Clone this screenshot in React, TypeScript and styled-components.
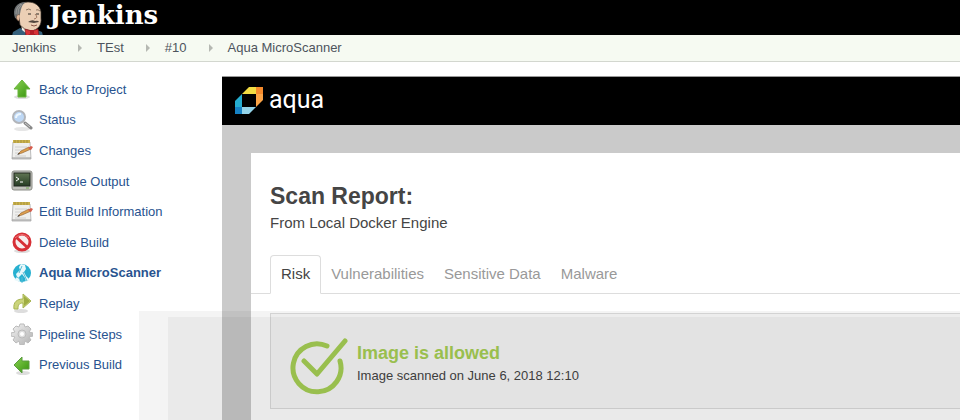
import React from "react";
import styled, { createGlobalStyle } from "styled-components";

const GlobalStyle = createGlobalStyle`
  *, *::before, *::after { box-sizing: border-box; }
  body { margin: 0; background: #fff; font-family: "Liberation Sans", Arial, sans-serif; font-size: 13px; color: #454545; }
  h1, h2, p, ul, ol { margin: 0; padding: 0; }
  ul, ol { list-style: none; }
`;

const Page = styled.div`
  position: relative;
  display: flex;
  flex-direction: column;
  min-height: 100vh;
  overflow: hidden;
`;

const TopBar = styled.header`
  display: flex;
  align-items: flex-start;
  height: 35px;
  padding-left: 12px;
  overflow: hidden;
  background: #000;
`;

const BrandLink = styled.a`
  display: flex;
  gap: 6px;
  color: #fff;
  text-decoration: none;
`;

const BrandName = styled.span`
  font-family: "DejaVu Serif", Georgia, serif;
  font-size: 26px;
  font-weight: bold;
  line-height: 31px;
`;

const Crumbs = styled.ol`
  display: flex;
  align-items: center;
  height: 27px;
  padding-left: 12px;
  background: #f6faf2;
  border-bottom: 1px solid #d3d7cf;
`;

const Crumb = styled.li`
  display: flex;
  align-items: center;
  & + &::before {
    content: "";
    margin: 0 15px 0 22px;
    border-left: 4px solid #b5b8b2;
    border-top: 4px solid transparent;
    border-bottom: 4px solid transparent;
  }
`;

const CrumbLink = styled.a`
  color: #4d545d;
  line-height: 20px;
  text-decoration: none;
`;

const Body = styled.div`
  display: flex;
  flex: 1;
`;

const SideNav = styled.nav`
  flex: 0 0 222px;
  padding: 12px 0 0 11px;
`;

const TaskList = styled.ul`
  display: grid;
  grid-auto-rows: 1fr;
  min-height: 306px;
`;

const Task = styled.a<{ $current?: boolean }>`
  display: flex;
  align-items: center;
  gap: 6px;
  height: 100%;
  color: #28538f;
  font-weight: ${(p) => (p.$current ? "bold" : "normal")};
  text-decoration: none;
`;

const Report = styled.main`
  display: flex;
  flex: 1;
  flex-direction: column;
  min-width: 0;
  margin-top: 14px;
  background: #cacaca;
`;

const ReportBar = styled.div`
  display: flex;
  align-items: center;
  gap: 6px;
  height: 49px;
  padding: 0 0 2px 13px;
  background: #000;
  border-top: 1px solid #999;
`;

const AquaName = styled.span`
  color: #fff;
  font-family: Roboto, sans-serif;
  font-size: 25px;
  line-height: 28px;
`;

const Sheet = styled.section`
  flex: 1;
  margin: 28px 0 0 29px;
  padding-top: 28px;
  background: #fff;
`;

const Title = styled.h1`
  padding-left: 19px;
  font-size: 23px;
  line-height: 30px;
`;

const Subtitle = styled.p`
  padding-left: 19px;
  font-size: 15px;
  line-height: 24px;
`;

const Tabs = styled.div`
  display: flex;
  margin-top: 20px;
  padding-left: 19px;
  border-bottom: 1px solid #ddd;
`;

const Tab = styled.button<{ $active?: boolean }>`
  height: 39px;
  margin-bottom: -1px;
  padding: 0 ${(p) => (p.$active ? 10 : 9)}px 2px;
  background: ${(p) => (p.$active ? "#fff" : "transparent")};
  border: 1px solid ${(p) => (p.$active ? "#ddd" : "transparent")};
  border-bottom-color: ${(p) => (p.$active ? "#fff" : "transparent")};
  border-radius: 4px 4px 0 0;
  color: ${(p) => (p.$active ? "#444" : "#999")};
  font: 15px "Liberation Sans", Arial, sans-serif;
`;

const Result = styled.div`
  display: flex;
  align-items: center;
  gap: 9px;
  height: 96px;
  margin: 19px 0 0 19px;
  padding: 12px 0 0 19px;
  background: #f8f8f8;
  border: 1px solid #ddd;
  border-right: 0;
`;

const ResultTitle = styled.h2`
  color: #a8d056;
  font-size: 18px;
  line-height: 24px;
`;

const ResultText = styled.p`
  line-height: 22px;
`;

const ResultBody = styled.div`
  padding-bottom: 6px;
`;

const Shade = styled.div`
  position: absolute;
  top: 311px;
  right: 0;
  bottom: 0;
  left: 139px;
  padding: 6px 0 0 29px;
  background: rgba(0, 0, 0, 0.045);
  pointer-events: none;
`;

const ShadeCore = styled.div`
  height: 100%;
  background: rgba(0, 0, 0, 0.04);
`;

const Icon = styled.svg`
  display: block;
  flex: none;
`;

const Butler = () => (
  <Icon width="31" height="36" viewBox="0 0 31 36" aria-hidden="true">
    <path d="M0 36 1 32 8 28 14 31 25 30 30 32 31 36Z" fill="#35607b" />
    <path d="M9 24 10 30 15 34 25 31 22 26Z" fill="#f3efe8" />
    <path d="M7 17 8 25Q13 31 19 31C26 30 30 25 29 18V12C28 5 22 2 16 2 9 2 5 8 7 17Z" fill="#eccfb5" stroke="#3a3028" strokeWidth=".7" />
    <path d="M3 18C0 9 4 2 14 2 9 5 9 10 8 14L7 20Z" fill="#6d7173" />
    <path d="M4 14Q4 7 9 4M6 15Q5 9 10 4" stroke="#aaa9a3" fill="none" strokeWidth=".7" />
    <path d="M8 15C4 13 3 20 7 21" fill="#e4b99b" stroke="#705442" strokeWidth=".7" />
    <path d="M14 10Q17 8 19 10M24 10Q26 9 28 11" fill="none" stroke="#75604e" strokeWidth=".8" />
    <path d="M16 14H19M24 14H27" stroke="#332e29" strokeWidth="1.2" />
    <path d="M23 14Q27 18 22 19" fill="none" stroke="#a37861" />
    <path d="M16 22Q20 19 23 21 26 20 27 22L22 23Z" fill="#51453d" />
    <path d="M19 25Q22 27 25 25" fill="none" stroke="#8a5748" />
    <path d="M13 29 20 31 26 29 27 36 20 34 14 36Z" fill="#d83236" stroke="#7d1a1c" strokeWidth=".7" />
    <path d="M18 30H22V35H18Z" fill="#b51d26" />
  </Icon>
);

const AquaMark = () => (
  <Icon width="28" height="27" viewBox="0 0 28 27" aria-hidden="true">
    <path d="M14 0H21V7H7Z" fill="#f2dc43" />
    <path d="M7 7V20H0V14Z" fill="#25add0" />
    <path d="M0 20H7V27H0Z" fill="#1682c5" />
    <path d="M7 20H21L14 27H7Z" fill="#94d4e9" />
    <path d="M21 0H28V7H21Z" fill="#f58a2c" />
    <path d="M21 7H28V13L21 20Z" fill="#fca446" />
  </Icon>
);

const Check = () => (
  <Icon width="58" height="58" viewBox="0 0 58 58" fill="none" stroke="#a8d056" strokeWidth="5" strokeLinecap="round" strokeLinejoin="round" aria-hidden="true">
    <path d="M37 8A24 24 0 1 0 50 23M14 23 27 36 55 3" />
  </Icon>
);

const Gradients = () => (
  <defs>
    <linearGradient id="green" x2="1" y2="1"><stop stopColor="#8bd253" /><stop offset="1" stopColor="#35920d" /></linearGradient>
    <linearGradient id="silver" x2="1" y2="1"><stop stopColor="#f2f2f2" /><stop offset="1" stopColor="#b0b0b0" /></linearGradient>
    <linearGradient id="screen" x2="0" y2="1"><stop stopColor="#607553" /><stop offset="1" stopColor="#263c24" /></linearGradient>
  </defs>
);

const glyphs: Record<string, React.ReactNode> = {
  up: <><ellipse cx="11" cy="19" rx="8" ry="2" fill="#ddd" /><path d="M11 2 19 11H15V19H7V11H3Z" fill="url(#green)" stroke="#69b43c" /></>,
  left: <><ellipse cx="12" cy="19" rx="7" ry="2" fill="#ddd" /><path d="M3 11 11 3V7H18V15H11V19Z" fill="url(#green)" stroke="#5b9c3f" /></>,
  search: <><ellipse cx="11" cy="20" rx="8" ry="2" fill="#e6e6e6" /><path d="M14 14 20 19" stroke="#888" strokeWidth="3" strokeLinecap="round" /><path d="M14 14 19 18" stroke="#ccc" /><circle cx="8" cy="8" r="6" fill="#bed8f5" stroke="#b2b5ba" strokeWidth="2" /><path d="M5 9Q5 5 10 5" fill="none" stroke="#edf7ff" strokeWidth="2" /></>,
  note: <><path d="M2 3H19L20 20H1Z" fill="#efefed" stroke="#bbb" /><path d="M1 19H20" stroke="#999" /><path d="M2 1H19V4H2Z" fill="#cbb24b" /><path d="M4 1V4M7 1V4M10 1V4M13 1V4M16 1V4" stroke="#97853c" strokeWidth=".7" /><path d="M4 8H16M4 11H12M4 14H9M4 17H15" stroke="#d0d0d0" /><path d="M7 15 10 12 18 8 20 10 11 14Z" fill="#dfa04e" stroke="#9a6835" strokeWidth=".7" /><path d="M17 9 20 7 22 8 20 11Z" fill="#d65c4d" /><path d="M6 16 8 14 9 15Z" fill="#333" /></>,
  console: <><rect x="1" y="1" width="20" height="19" rx="2" fill="#c1c2bc" stroke="#8c8d87" /><rect x="3" y="3" width="16" height="13" fill="url(#screen)" stroke="#20271e" /><path d="M5 7 8 9 5 11M9 12H12" fill="none" stroke="#fff" /><path d="M15 18H18" stroke="#70a650" /></>,
  stop: <><ellipse cx="11" cy="20" rx="8" ry="2" fill="#ddd" /><circle cx="11" cy="11" r="8" fill="#f7eded" stroke="#d72f36" strokeWidth="3" /><path d="M5 6 17 17" stroke="#d72f36" strokeWidth="3" /><path d="M4 7Q11 0 18 7" fill="none" stroke="#ee7779" /></>,
  aqua: <><circle cx="11" cy="11" r="9" fill="#27b0d0" /><path d="M10 2 14 3 15 7 13 10 15 14 19 18 15 20 14 16 11 12 8 15 9 20 3 18 6 15 5 12 9 8 8 5Z" fill="#e8f8fb" /><path d="M11 4 8 11M11 15V21M6 15 9 17M12 10 16 19" fill="none" stroke="#55bcd5" /></>,
  replay: <><ellipse cx="10" cy="19" rx="7" ry="2" fill="#ddd" /><path d="M3 17C2 10 6 7 12 7V2L20 9 12 16V11C8 11 7 13 7 17Z" fill="#cbd47b" stroke="#a6b452" /><path d="M13 4 19 9 13 14Z" fill="#9fad42" /></>,
  gear: <><path d="M9 1H13L14 4 17 3 20 6 18 9 22 10V13L18 14 20 17 17 20 14 18 13 22H9L8 18 5 20 2 17 4 14 0 13V10L4 9 2 6 5 3 8 4Z" fill="url(#silver)" stroke="#bbb" /><circle cx="11" cy="11" r="4" fill="#ddd" stroke="#bbb" /><circle cx="11" cy="11" r="2" fill="#fff" /></>,
};

const tasks = [
  ["up", "Back to Project"], ["search", "Status"], ["note", "Changes"], ["console", "Console Output"], ["note", "Edit Build Information"],
  ["stop", "Delete Build"], ["aqua", "Aqua MicroScanner"], ["replay", "Replay"], ["gear", "Pipeline Steps"], ["left", "Previous Build"],
];

export default function App() {
  return (
    <Page>
      <GlobalStyle />
      <TopBar><BrandLink href="#"><Butler /><BrandName>Jenkins</BrandName></BrandLink></TopBar>
      <Crumbs>
        {["Jenkins", "TEst", "#10", "Aqua MicroScanner"].map((name) => <Crumb key={name}><CrumbLink href="#">{name}</CrumbLink></Crumb>)}
      </Crumbs>
      <Body>
        <SideNav>
          <TaskList>
            {tasks.map(([icon, label]) => (
              <li key={label}>
                <Task href="#" $current={icon === "aqua"}>
                  <Icon width="22" height="22" viewBox="0 0 22 22" aria-hidden="true"><Gradients />{glyphs[icon]}</Icon>
                  {label}
                </Task>
              </li>
            ))}
          </TaskList>
        </SideNav>
        <Report>
          <ReportBar><AquaMark /><AquaName>aqua</AquaName></ReportBar>
          <Sheet>
            <Title>Scan Report:</Title>
            <Subtitle>From Local Docker Engine</Subtitle>
            <Tabs role="tablist">
              {["Risk", "Vulnerabilities", "Sensitive Data", "Malware"].map((name) => <Tab key={name} role="tab" aria-selected={name === "Risk"} $active={name === "Risk"}>{name}</Tab>)}
            </Tabs>
            <Result>
              <Check />
              <ResultBody><ResultTitle>Image is allowed</ResultTitle><ResultText>Image scanned on June 6, 2018 12:10</ResultText></ResultBody>
            </Result>
          </Sheet>
        </Report>
      </Body>
      <Shade><ShadeCore /></Shade>
    </Page>
  );
}
